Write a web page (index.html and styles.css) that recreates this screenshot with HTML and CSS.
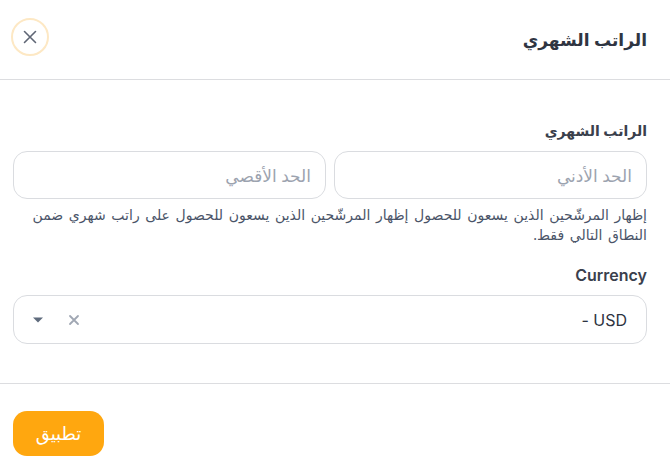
FILE: index.html
```html
<!DOCTYPE html>
<html lang="ar" dir="rtl">
<head>
<meta charset="utf-8">
<link rel="stylesheet" href="styles.css">
</head>
<body>
<div class="dialog">
  <header class="dlg-header">
    <h2 class="dlg-title">الراتب الشهري</h2>
    <button class="close-btn" aria-label="close">
      <svg width="16" height="16" viewBox="0 0 16 16"><path d="M2.5 2.5 L13.5 13.5 M13.5 2.5 L2.5 13.5" stroke="#5f6675" stroke-width="1.6" stroke-linecap="round" fill="none"/></svg>
    </button>
  </header>
  <section class="dlg-body">
    <div class="field">
      <label class="field-label">الراتب الشهري</label>
      <div class="range-row">
        <input class="text-input" type="text" placeholder="الحد الأدني">
        <input class="text-input" type="text" placeholder="الحد الأقصي">
      </div>
      <p class="hint">إظهار المرشّحين الذين يسعون للحصول إظهار المرشّحين الذين يسعون للحصول على راتب شهري ضمن النطاق التالي فقط.</p>
    </div>
    <div class="field currency">
      <label class="field-label latin">Currency</label>
      <div class="select-box">
        <span class="select-value">USD -</span>
        <span class="select-icons">
          <svg class="clear-ic" width="12" height="12" viewBox="0 0 12 12"><path d="M2 2 L10 10 M10 2 L2 10" stroke="#a0a7b3" stroke-width="1.8" stroke-linecap="round" fill="none"/></svg>
          <svg class="caret-ic" width="12" height="8" viewBox="0 0 12 8"><path d="M1 1.5 L11 1.5 L6 6.5 Z" fill="#5f6b7d"/></svg>
        </span>
      </div>
    </div>
  </section>
  <footer class="dlg-footer">
    <button class="apply-btn">تطبيق</button>
  </footer>
</div>
</body>
</html>
```
FILE: styles.css
```css
* { box-sizing: border-box; }
html, body { margin: 0; padding: 0; background: #fff; }
body {
  font-family: "Noto Sans", "DejaVu Sans", Inter, sans-serif;
  color: #2d3340;
}
.dialog { width: 670px; height: 466px; display: flex; flex-direction: column; }
.dlg-header {
  height: 80px;
  display: flex;
  align-items: center;
  justify-content: space-between;
  padding: 0 23px 0 11px;
  border-bottom: 1px solid #dcdde0;
}
.dlg-title {
  margin: 0;
  font-size: 17px;
  font-weight: 700;
  color: #2f3542;
}
.close-btn {
  width: 38px;
  height: 38px;
  border-radius: 50%;
  border: 2px solid #fde8c4;
  background: #fff;
  display: flex;
  align-items: center;
  justify-content: center;
  padding: 0;
  margin-top: -5px;
}
.dlg-body {
  padding: 40px 23px 0 13px;
  height: 304px;
  border-bottom: 1px solid #dcdde0;
}
.field { display: flex; flex-direction: column; }
.field-label {
  font-size: 14px;
  font-weight: 700;
  color: #3a404c;
  line-height: 22px;
  margin-bottom: 9px;
}
.field-label.latin { font-family: Inter, "Noto Sans", sans-serif; font-weight: 600; font-size: 16px; }
.range-row { display: flex; gap: 8px; }
.text-input {
  flex: 1;
  height: 48px;
  border: 1px solid #dadce0;
  border-radius: 14px;
  padding: 0 14px;
  font-family: inherit;
  font-size: 17px;
  color: #2d3340;
  background: #fff;
  outline: none;
  min-width: 0;
}
.text-input::placeholder { color: #9ca3af; }
.hint {
  margin: 6px 0 0;
  font-size: 14px;
  word-spacing: 2px;
  line-height: 20px;
  color: #4a5468;
}
.currency { margin-top: 19px; }
.select-box {
  height: 49px;
  border: 1px solid #dadce0;
  border-radius: 14px;
  display: flex;
  align-items: center;
  justify-content: space-between;
  padding: 0 19px 0 18px;
}
.select-value {
  font-family: Inter, "Noto Sans", sans-serif;
  font-size: 16px;
  color: #2d3340;
}
.select-icons {
  display: flex;
  align-items: center;
  gap: 24px;
  direction: ltr;
  flex-direction: row-reverse;
}
.dlg-footer {
  flex: 1;
  display: flex;
  align-items: center;
  justify-content: flex-end;
  padding: 0 13px;
}
.apply-btn {
  width: 91px;
  height: 45px;
  border: none;
  border-radius: 14px;
  background: #ffa70f;
  color: #fff;
  font-family: inherit;
  font-size: 18px;
  margin-top: 16px;
}
```
